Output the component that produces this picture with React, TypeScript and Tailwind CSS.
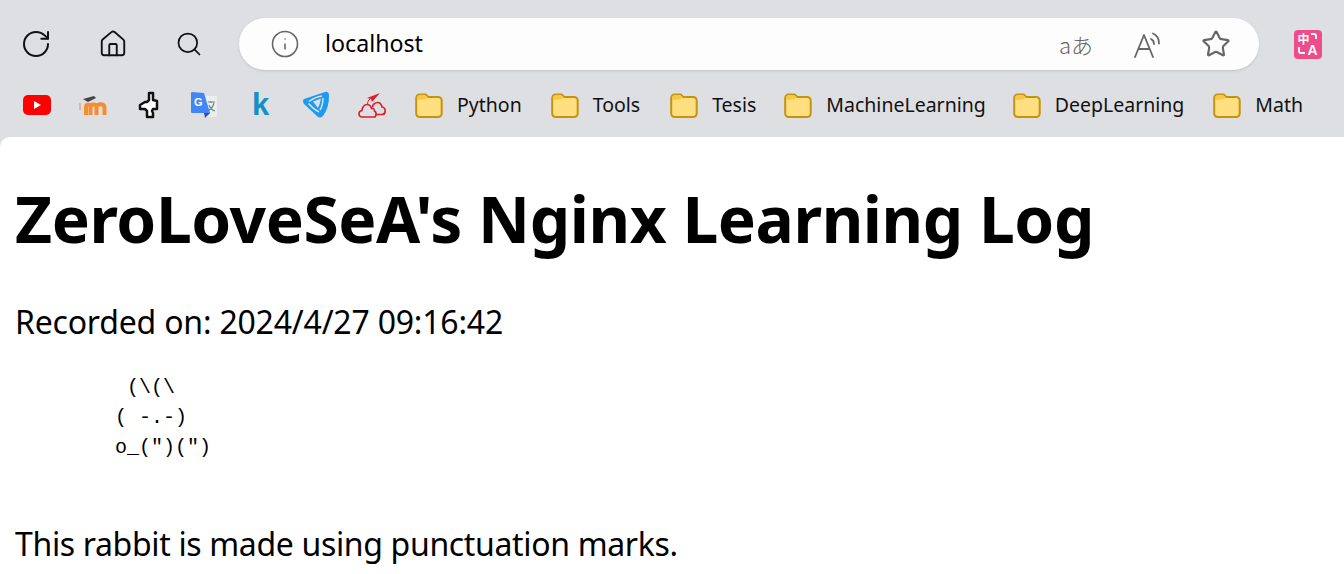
import { Home, Info, RotateCw, Search, Star } from "lucide-react";

const sans = "font-['Noto_Sans','Open_Sans',sans-serif]";

function Folder() {
  return (
    <svg width="28" height="25" viewBox="0 0 28 25" fill="none" className="shrink-0">
      <path d="M1.200 5a3.500 3.500 0 0 1 3.500-3.500h6l2.500 2.500h10a3.500 3.500 0 0 1 3.500 3.500v13a3.500 3.500 0 0 1-3.500 3.500h-18.500a3.500 3.500 0 0 1-3.500-3.500z" fill="#ffdf80" stroke="#c4930f" strokeWidth="2" />
      <path d="M2 7v-2a3 3 0 0 1 3-3h5l2.500 2-2.500 2.500z" fill="#f6c945" />
    </svg>
  );
}

function BookmarkFolder({ name, gap }: { name: string; gap: string }) {
  return (
    <div className={`flex items-center gap-[14px] ${gap}`}>
      <Folder />
      <span className="text-[19.5px] leading-none text-[#111]">{name}</span>
    </div>
  );
}

function YouTubeIcon() {
  return (
    <svg width="28" height="20" viewBox="0 0 28 20">
      <rect width="28" height="20" rx="5" fill="#f00" />
      <path d="M11 6l7 4-7 4z" fill="#fff" />
    </svg>
  );
}

function MoodleIcon() {
  return (
    <svg width="28" height="24" viewBox="0 0 28 24">
      <path d="M7 22v-8c0-3 4.500-3 4.500 0v8M11.500 14c0-3.500 5.500-3.500 6 0v8M17.500 14c0-3.500 7.500-4 8 0v8" fill="none" stroke="#f78e2d" strokeWidth="4" />
      <path d="M4 6l11-3 2 2-8 4z" fill="#444" />
      <path d="M0 10h2v7h-2z" fill="#e9b38d" />
    </svg>
  );
}

function PlaneIcon() {
  return (
    <svg width="22" height="29" viewBox="0 0 22 29">
      <path d="M11 2h4v7l4 1v8h-4l-1 2 1 2v4h-6v-6l-2-2h-5v-4l5-3h2l2-2z" fill="#fff" stroke="#111" strokeWidth="2.500" strokeLinejoin="round" />
    </svg>
  );
}

function TranslateIcon() {
  return (
    <svg width="28" height="28" viewBox="0 0 28 28">
      <rect x="14" y="5" width="13" height="21" rx="1" fill="#eceded" />
      <path d="M18 11h7M21 10v2M24 12c-1 4-3 6-6 8M19 14c1 3 3 5 6 6" stroke="#6b8791" strokeWidth="1.200" fill="none" />
      <path d="M2 1a1 1 0 0 0-1 1v19a1 1 0 0 0 1 1h12l2 3 4-3-6-20z" fill="#4285f4" />
      <path d="M14 22h6l-5 5z" fill="#3f47b8" />
      <text x="4" y="15" fill="#fff" fontSize="11" fontWeight="700" fontFamily="Liberation Sans">G</text>
    </svg>
  );
}

function ShieldIcon() {
  return (
    <svg width="28" height="28" viewBox="0 0 28 28">
      <path d="M2 8L23 1Q27 0 27 5Q27 17 21 25Q18 28 15 25L2 13Q0 10 2 8z" fill="#1d9bf0" />
      <path d="M11 10.500L19 7.500Q18 13 16 17z" fill="#dedfe3" />
      <path d="M7 10.500Q13 6 20 5M6.500 12.500Q11 18 17 21M21 7Q21 14 18 19" stroke="#dedfe3" strokeWidth="1.500" fill="none" />
    </svg>
  );
}

function CloudIcon() {
  return (
    <svg width="28" height="26" viewBox="0 0 28 26" fill="none" stroke="#dc1f2e" strokeWidth="1.700" strokeLinejoin="round">
      <path d="M4 25c-4 0-4-6 0-6.500 0-3.500 2.500-6 5-6 2.500 0 4 2 4.500 4 2-.5 3 1 3 2.500 2 1 2 4 .5 6z" />
      <path d="M14.500 15c0-2.500 2.500-4.500 5-4.500s4 2 4.500 4.500c2.500 0 3.500 2.500 3 5-.3 2-1.500 2.500-3 2.500h-6" />
      <path d="M9 6l13-5-8 9-1-3z" fill="#dc1f2e" stroke="none" />
      <path d="M9.500 12c0-2 1-4 2.500-5" strokeWidth="1" />
    </svg>
  );
}

function KIcon() {
  return <span className="font-['Liberation_Sans',sans-serif] text-[31px] leading-none font-bold text-[#1190c9]">k</span>;
}

function TranslatorIcon() {
  return (
    <svg width="28" height="29" viewBox="0 0 28 29">
      <rect width="28" height="29" rx="4" fill="#ee4d8b" />
      <text x="3.500" y="14" fill="#fff" fontSize="12" fontWeight="700" fontFamily="Noto Sans CJK SC">中</text>
      <text x="13.500" y="25" fill="#fff" fontSize="14" fontWeight="700" fontFamily="Liberation Sans">A</text>
      <path d="M17 4h3a2 2 0 0 1 2 2v3M5 17v4a2 2 0 0 0 2 2h4" stroke="#fff" strokeWidth="1.800" fill="none" />
    </svg>
  );
}

function ReadAloudIcon() {
  return (
    <svg width="28" height="28" viewBox="0 0 28 28" fill="none" stroke="#666" strokeWidth="1.800" strokeLinecap="round" strokeLinejoin="round">
      <path d="M1 27L10 5l9 22M4.500 19h11" />
      <path d="M17 9c2 1 3 3 3 5M19 3.500c3.500 1.500 6 5 6 10" />
    </svg>
  );
}

export default function App() {
  return (
    <div className={`h-[574px] w-[1344px] overflow-hidden bg-[#dedfe3] ${sans}`}>
      <header className="flex h-[88px] items-center pl-[20px]">
        <RotateCw className="h-[32px] w-[32px] text-[#111]" strokeWidth={1.500} />
        <Home className="ml-[46px] h-[30px] w-[30px] text-[#111]" strokeWidth={1.500} />
        <Search className="ml-[47px] h-[28px] w-[28px] text-[#111]" strokeWidth={1.500} />
        <div className="ml-[36px] flex h-[52px] w-[1020px] items-center rounded-full bg-[#fdfdfd] pl-[31px] shadow-sm">
          <Info className="h-[30px] w-[30px] text-[#666]" strokeWidth={1.250} />
          <span className="ml-[25px] text-[23.2px] leading-none text-black">localhost</span>
          <span className="ml-auto font-['Noto_Sans_CJK_JP',sans-serif] text-[22px] leading-none font-light text-[#666]">aあ</span>
          <div className="ml-[41px]">
            <ReadAloudIcon />
          </div>
          <Star className="mr-[28px] ml-[39px] h-[30px] w-[30px] text-[#666]" strokeWidth={1.750} />
        </div>
        <div className="ml-[35px]">
          <TranslatorIcon />
        </div>
      </header>

      <nav className="flex h-[49px] items-center pb-[15px] pl-[23px]">
        <YouTubeIcon />
        <div className="ml-[28px]"><MoodleIcon /></div>
        <div className="ml-[31px]"><PlaneIcon /></div>
        <div className="ml-[30px]"><TranslateIcon /></div>
        <div className="ml-[34px] w-[18px]"><KIcon /></div>
        <div className="ml-[32px]"><ShieldIcon /></div>
        <div className="ml-[28px]"><CloudIcon /></div>
        <BookmarkFolder name="Python" gap="ml-[29px]" />
        <BookmarkFolder name="Tools" gap="ml-[29px]" />
        <BookmarkFolder name="Tesis" gap="ml-[30px]" />
        <BookmarkFolder name="MachineLearning" gap="ml-[28px]" />
        <BookmarkFolder name="DeepLearning" gap="ml-[27px]" />
        <BookmarkFolder name="Math" gap="ml-[29px]" />
      </nav>

      <main className="h-[437px] overflow-hidden rounded-tl-[10px] bg-white pl-[15px]">
        <h1 className="pt-[42px] text-[64px] leading-[80px] font-bold tracking-[-0.42px] text-black">ZeroLoveSeA's Nginx Learning Log</h1>
        <p className="mt-[41px] text-[32px] leading-[44px] tracking-[-0.2px] text-black">Recorded on: 2024/4/27 09:16:42</p>
        <pre className="mt-[29px] pl-[100px] font-['Liberation_Mono',monospace] text-[20px] leading-[30px] text-black">
          {" (\\(\\\n( -.-)\no_(\")(\")"}
        </pre>
        <p className="mt-[59px] text-[32px] leading-[44px] tracking-[-0.34px] text-black">This rabbit is made using punctuation marks.</p>
      </main>
    </div>
  );
}
